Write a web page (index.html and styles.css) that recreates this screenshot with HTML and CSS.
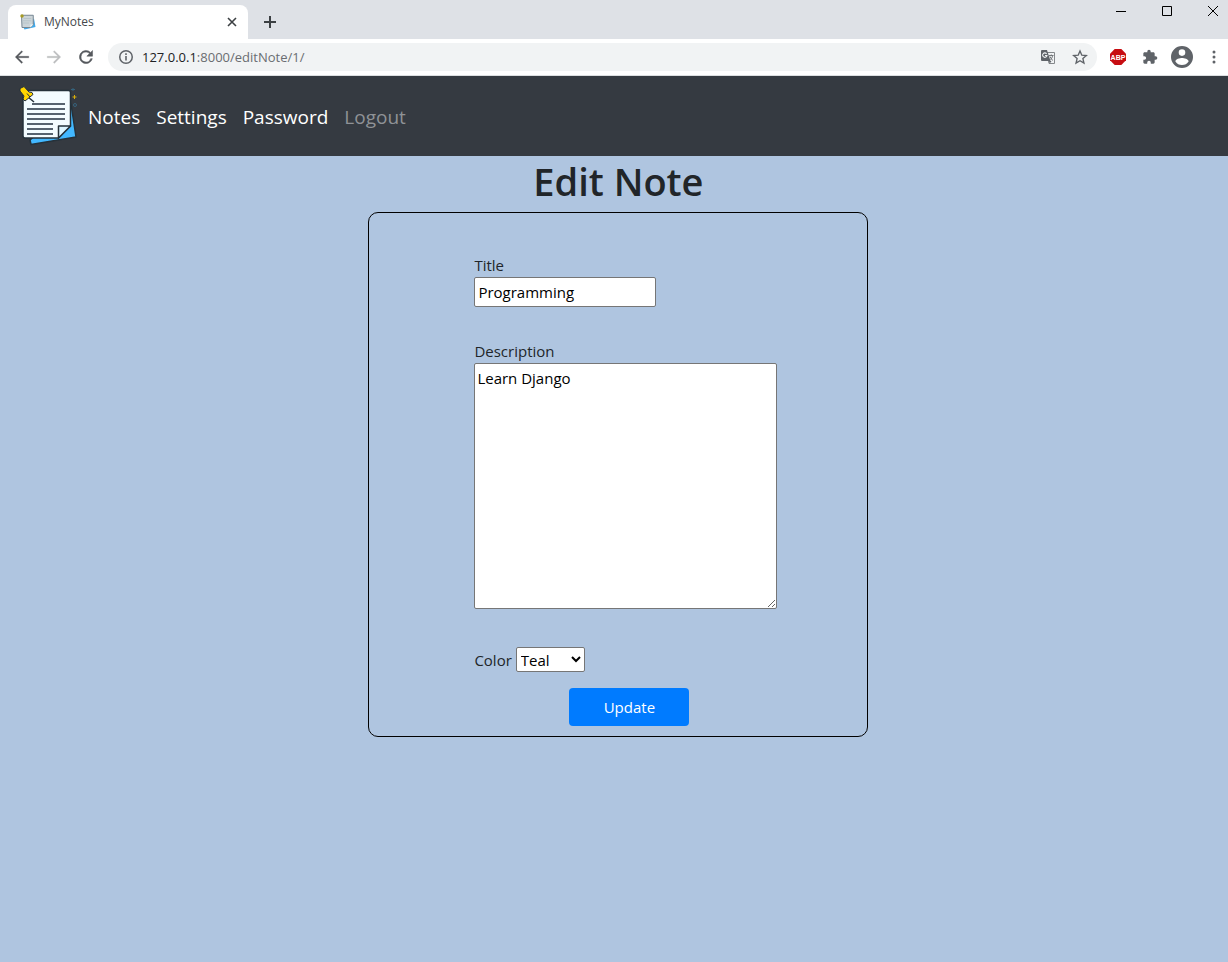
FILE: index.html
```html
<!DOCTYPE html>
<html lang="en">
<head>
<meta charset="utf-8">
<title>MyNotes</title>
<link rel="stylesheet" href="styles.css">
</head>
<body>
<header class="browser">
  <div class="tabstrip">
    <div class="tab">
      <svg class="favicon" viewBox="0 0 64 64"><path d="M14 54l4 8 44-10-6-34z" fill="#42a9ea"/><path d="M6 5h47v38L42 54H8z" fill="#cbd4d8" stroke="#768793" stroke-width="4"/><path d="M42 54V42h11z" fill="#eef8fb"/><path d="M14 18h31M12 27h33M12 36h24" stroke="#b3c0c6" stroke-width="3"/><circle cx="8" cy="8" r="7" fill="#a69a25"/></svg>
      <span class="tab-title">MyNotes</span>
      <button class="icon-btn small" aria-label="Close tab"><svg viewBox="0 0 16 16"><path d="M4 4l8 8M12 4l-8 8" stroke="#3c4043" stroke-width="1.600"/></svg></button>
    </div>
    <button class="icon-btn small new-tab" aria-label="New tab"><svg viewBox="0 0 16 16"><path d="M8 2v12M2 8h12" stroke="#3c4043" stroke-width="2"/></svg></button>
    <div class="window-buttons">
      <button aria-label="Minimize"><svg viewBox="0 0 10 10"><path d="M0 5.500h10" stroke="#000"/></svg></button>
      <button aria-label="Maximize"><svg viewBox="0 0 10 10"><path d="M.5.5h9v9h-9z" fill="none" stroke="#000"/></svg></button>
      <button aria-label="Close"><svg viewBox="0 0 10 10"><path d="M0 0l10 10M10 0L0 10" stroke="#000"/></svg></button>
    </div>
  </div>
  <div class="toolbar">
    <div class="history">
      <button class="icon-btn" aria-label="Back"><svg viewBox="0 0 24 24"><path d="M21 11H6.830l6.090-6.090L11.500 3.500l-8.500 8.500 8.500 8.500 1.410-1.410L6.830 13H21z" fill="#55585d" stroke="#55585d" stroke-width=".4"/></svg></button>
      <button class="icon-btn" aria-label="Forward"><svg viewBox="0 0 24 24"><path d="M3 11h14.170l-6.090-6.090L12.500 3.500 21 12l-8.500 8.500-1.410-1.410L17.170 13H3z" fill="#bcbdbf" stroke="#bcbdbf" stroke-width=".4"/></svg></button>
      <button class="icon-btn" aria-label="Reload"><svg viewBox="1 1 22 22"><path d="M17.650 6.350A8 8 0 1 0 19.730 14h-2.080A6 6 0 1 1 12 6c1.660 0 3.140.69 4.220 1.780L13 11h7V4z" fill="#55585d" stroke="#55585d" stroke-width=".6"/></svg></button>
    </div>
    <div class="omnibox">
      <svg class="info" viewBox="0 0 16 16"><circle cx="8" cy="8" r="6.250" fill="none" stroke="#5f6368" stroke-width="1.500"/><path d="M8 7v4.500M8 4.200v1.700" stroke="#5f6368" stroke-width="1.600"/></svg>
      <span class="url"><b>127.0.0.1</b>:8000/editNote/1/</span>
      <button class="icon-btn" aria-label="Translate"><svg viewBox="0 0 16 16"><path d="M6.500 3.500H14.500V14.500H9z" fill="#f1f3f4" stroke="#85888b"/><path d="M2 1h5l3.500 11H2q-1 0-1-1V2q0-1 1-1z" fill="#5f6368"/><path d="M9 12l.7 2.700L11.500 12z" fill="#5f6368"/><path d="M6.600 4.800A2.200 2.200 0 1 0 7 6.500H5" fill="none" stroke="#f1f3f4" stroke-width="1.100"/><path d="M9 6.500h4.500M11.300 5.500v1M12.700 6.500c-.5 2-1.300 3.500-2.200 4.500M10 7.500c.6 1.800 1.600 3 3 4" fill="none" stroke="#74777b"/></svg></button>
      <button class="icon-btn" aria-label="Bookmark"><svg viewBox="1 1 22 22"><path d="M12 3.800l2.500 5.700 6.200.6-4.700 4.100 1.400 6.100-5.400-3.200-5.400 3.200 1.400-6.100-4.700-4.100 6.200-.6z" fill="none" stroke="#5f6368" stroke-width="1.900"/></svg></button>
    </div>
    <button class="icon-btn small" aria-label="Adblock Plus"><svg viewBox="0 0 16 16"><path d="M4.700 0h6.600L16 4.700v6.600L11.300 16H4.700L0 11.300V4.700z" fill="#c70d12"/><text class="abp" x="8" y="11" text-anchor="middle">ABP</text></svg></button>
    <button class="icon-btn extensions" aria-label="Extensions"><svg viewBox="0 0 24 24"><path d="M20.500 11H19V7c0-1.100-.9-2-2-2h-4V3.500a2.500 2.500 0 0 0-5 0V5H4c-1.100 0-2 .9-2 2v3.800h1.500a2.700 2.700 0 0 1 0 5.400H2V20c0 1.100.9 2 2 2h3.800v-1.500a2.700 2.700 0 0 1 5.400 0V22H17c1.100 0 2-.9 2-2v-4h1.500a2.500 2.500 0 0 0 0-5z" fill="#5f6368"/></svg></button>
    <button class="icon-btn profile" aria-label="Profile"><svg viewBox="2 2 20 20"><path d="M12 2a10 10 0 1 0 0 20 10 10 0 0 0 0-20zm0 3a3 3 0 1 1 0 6 3 3 0 0 1 0-6zm0 14.200A7.200 7.200 0 0 1 6 15.980c.03-1.990 4-3.080 6-3.080s5.970 1.090 6 3.080a7.200 7.200 0 0 1-6 3.220z" fill="#5f6368"/></svg></button>
    <button class="icon-btn small" aria-label="Menu"><svg viewBox="0 0 16 16"><g fill="#5f6368"><circle cx="8" cy="3" r="1.500"/><circle cx="8" cy="8" r="1.500"/><circle cx="8" cy="13" r="1.500"/></g></svg></button>
  </div>
</header>
<nav class="navbar">
  <a href="#" aria-label="MyNotes home">
    <svg class="logo" viewBox="0 0 64 64">
      <path d="M14 56 L15 60.500 L60 53 L55 20 Z" fill="#42b8ff" stroke="#25313a" stroke-width="1.500" stroke-linejoin="round"/>
      <path d="M9 6.500 Q7 6.500 7 8.500 V52 Q7 54 9 54 H42.500 L54.500 42 V8.500 Q54.500 6.500 52.500 6.500 Z" fill="#f3fcff" stroke="#25313a" stroke-width="1.500"/>
      <path d="M42.500 54 V42 H54.500 Z" fill="#dcf5ff" stroke="#25313a" stroke-width="1.500" stroke-linejoin="round"/>
      <path d="M16 20H49M11 25H49M11 30H49M11 35H49M11 40H37M11 45H37M11 50H37" stroke="#56636f" stroke-width="1.800"/>
      <path d="M12 13 L18 18" stroke="#25313a" stroke-width="1.500"/>
      <path d="M4 4.500 L8 2.500 L13 8 L16 8.500 L17 10.500 L9 17 L7 15 L8 12 L4 7 Z" fill="#ffd500" stroke="#25313a" stroke-linejoin="round"/>
      <path d="M11 9.500 L14 13" stroke="#25313a"/>
      <path d="M58.500 11v4M56.500 13h4" stroke="#d8ae0a"/>
      <path d="M55 5.500h4M57 4v3" stroke="#35637c"/>
      <circle cx="59" cy="21" r="1.500" fill="none" stroke="#35637c"/>
    </svg>
  </a>
  <a class="nav-link" href="#">Notes</a>
  <a class="nav-link" href="#">Settings</a>
  <a class="nav-link" href="#">Password</a>
  <a class="nav-link muted" href="#">Logout</a>
</nav>
<main class="page">
  <h1>Edit Note</h1>
  <form class="card">
    <div class="field">
      <label for="title">Title</label>
      <input id="title" type="text" value="Programming">
    </div>
    <div class="field">
      <label for="description">Description</label>
      <textarea id="description" spellcheck="false">Learn Django</textarea>
    </div>
    <div class="field-row">
      <label for="color">Color</label>
      <select id="color"><option>Teal</option></select>
    </div>
    <button class="submit" type="button">Update</button>
  </form>
</main>
</body>
</html>
```
FILE: styles.css
```css
* { box-sizing: border-box; }
body {
  margin: 0;
  min-height: 100vh;
  background: #afc5e0;
  color: #212529;
  font: 15px/24px "Open Sans", "Noto Sans", sans-serif;
}
button { border: 0; padding: 0; background: none; font: inherit; }
svg { display: block; }

.browser { background: #fff; border-bottom: 1px solid #dcdfe1; }
.tabstrip {
  display: flex;
  height: 39px;
  padding-left: 8px;
  background: #dee1e6;
}
.tab {
  display: flex;
  align-items: center;
  gap: 8px;
  width: 240px;
  height: 34px;
  margin-top: 5px;
  padding: 0 8px 0 12px;
  background: #fff;
  border-radius: 8px 8px 0 0;
}
.favicon { width: 16px; height: 16px; }
.tab-title { flex: 1; font-size: 12px; color: #45484c; }
.icon-btn { flex: none; width: 18px; height: 18px; }
.icon-btn svg { width: 100%; height: 100%; }
.small { width: 16px; height: 16px; }
.new-tab { margin: 14px 0 0 14px; }
.window-buttons { display: flex; margin-left: auto; overflow: hidden; }
.window-buttons button {
  display: flex;
  justify-content: center;
  width: 46px;
  height: 30px;
  padding-top: 6px;
}
.window-buttons button:last-child { margin-right: -8px; }
.window-buttons svg { width: 10px; height: 10px; overflow: visible; }

.toolbar {
  display: flex;
  align-items: center;
  gap: 13px;
  height: 36px;
  padding: 0 6px 0 13px;
}
.history { display: flex; gap: 14px; }
.omnibox {
  flex: 1;
  display: flex;
  align-items: center;
  gap: 8px;
  height: 28px;
  padding: 0 9px 0 10px;
  border-radius: 14px;
  background: #f1f3f4;
}
.info { width: 16px; height: 16px; }
.url { flex: 1; font-size: 13px; color: #6a6d71; }
.url b { font-weight: 400; color: #202124; }
.omnibox .icon-btn { width: 16px; height: 16px; }
.omnibox .icon-btn + .icon-btn { margin-left: 8px; }
.abp { font: bold 7px "Liberation Sans", sans-serif; fill: #fff; }
.extensions { width: 16px; height: 16px; margin-left: 3px; }
.profile { width: 22px; height: 22px; }

.navbar {
  display: flex;
  align-items: center;
  gap: 16px;
  height: 80px;
  padding: 0 16px;
  background: #353a41;
}
.logo { width: 64px; height: 64px; margin-right: -8px; }
.nav-link {
  padding-top: 2px;
  color: #fff;
  font-size: 19px;
  line-height: 30px;
  text-decoration: none;
}
.muted { color: #8f9296; }

.page { width: 500px; margin-left: 30%; }
h1 {
  margin: 0 0 8px;
  padding-top: 2px;
  font-size: 38px;
  line-height: 46px;
  font-weight: 600;
  text-align: center;
}
.card {
  padding: 40px 90px 10px 105px;
  border: 1px solid #000;
  border-radius: 10px;
}
.field { margin-bottom: 32px; }
.field label { display: block; }
input, textarea, select {
  display: block;
  margin: 0;
  border: 1px solid #767676;
  border-radius: 2px;
  background: #fff;
  color: #000;
  font: inherit;
}
input { width: 182px; height: 30px; padding: 1px 3px; }
textarea { width: 303px; height: 246px; padding: 2px; }
.field-row { display: flex; align-items: center; gap: 4px; margin-top: 38px; }
select { width: 69px; height: 25px; padding: 0; }
.submit {
  display: block;
  width: 120px;
  height: 38px;
  margin: 16px auto 0 95px;
  border-radius: 4px;
  background: #007bff;
  color: #fff;
}
```
